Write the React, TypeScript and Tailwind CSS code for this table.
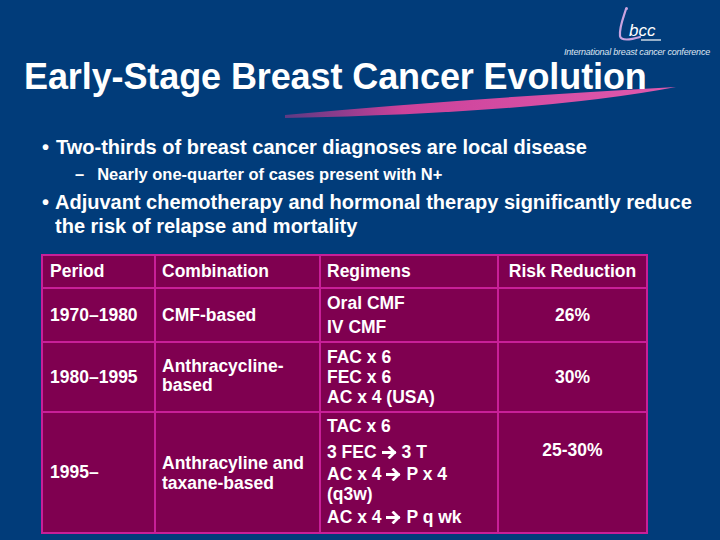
import React from "react";

const Arrow = () => (
  <svg width="15" height="13" viewBox="0 0 15 13" className="inline-block mx-[5px] align-[-1px]">
    <path d="M1 6.5 H12.5 M7.5 1.5 L12.5 6.5 L7.5 11.5" stroke="white" strokeWidth="2.8" fill="none" strokeLinecap="square" />
  </svg>
);

const cell = "bg-[#7f0050] text-white font-bold text-[17.5px] flex";

export default function App() {
  return (
    <div
      className="relative w-[720px] h-[540px] overflow-hidden bg-[#013c7a] flex flex-col"
      style={{ fontFamily: '"Liberation Sans", Arial, sans-serif' }}
    >
      {/* logo */}
      <div className="h-[59px] flex flex-col items-end pr-[10px] pt-[5px]">
        <svg width="52" height="38" viewBox="0 0 52 38" className="mr-[46px]">
          <path d="M14 4 C12 11 7 22 8 31 C9 36 18 35 28 32" stroke="#c9a3e0" strokeWidth="2.2" fill="none" strokeLinecap="round" />
          <circle cx="14.5" cy="3.5" r="1.5" fill="#c9a3e0" />
          <text x="17" y="31" fill="white" fontSize="17" fontStyle="italic" fontFamily="Liberation Sans, Arial, sans-serif">bcc</text>
          <line x1="29" y1="35" x2="49" y2="35" stroke="white" strokeWidth="1.2" />
        </svg>
        <div className="mt-[5px] text-[9px] leading-[9px] italic text-[#dfe6f2] tracking-[-0.2px]">
          International breast cancer conference
        </div>
      </div>

      {/* swoosh */}
      <svg className="absolute left-0 top-0 pointer-events-none" width="720" height="130">
        <defs>
          <linearGradient id="sw" x1="0" x2="1" y1="0" y2="0">
            <stop offset="0" stopColor="#b8388e" stopOpacity="0.5" />
            <stop offset="0.3" stopColor="#cc429a" />
            <stop offset="1" stopColor="#e05aae" />
          </linearGradient>
        </defs>
        <path d="M285 115 Q460 99 676 87 Q540 113 285 118 Z" fill="url(#sw)" />
      </svg>

      {/* title */}
      <h1 className="relative pl-[24px] text-[36px] leading-[36px] font-bold text-white tracking-[-0.1px]">
        Early-Stage Breast Cancer Evolution
      </h1>

      {/* bullets */}
      <div className="mt-[40px] text-white font-bold">
        <div className="flex text-[20px] leading-[24px] pl-[42px]">
          <span className="w-[14px]">•</span>
          <span>Two-thirds of breast cancer diagnoses are local disease</span>
        </div>
        <div className="flex mt-[5px] text-[16.5px] leading-[20px] pl-[75px]">
          <span className="mr-[13px]">–</span>
          <span>Nearly one-quarter of cases present with N+</span>
        </div>
        <div className="flex mt-[6px] text-[20px] leading-[24px] pl-[42px]">
          <span className="w-[13px] shrink-0">•</span>
          <span className="w-[650px]">
            Adjuvant chemotherapy and hormonal therapy significantly reduce the risk of relapse and mortality
          </span>
        </div>
      </div>

      {/* table */}
      <div className="mt-[16px] ml-[41px] w-[607px] bg-[#c81f98] p-[2px] grid grid-cols-[111px_163px_176px_147px] grid-rows-[31px_52px_68px_119px] gap-[2px]">
        <div className={`${cell} items-center pl-[7px]`}>Period</div>
        <div className={`${cell} items-center pl-[6px]`}>Combination</div>
        <div className={`${cell} items-center pl-[6px]`}>Regimens</div>
        <div className={`${cell} items-center justify-center`}>Risk Reduction</div>

        <div className={`${cell} items-center pl-[7px]`}>1970–1980</div>
        <div className={`${cell} items-center pl-[6px]`}>CMF-based</div>
        <div className={`${cell} flex-col justify-center pl-[6px] leading-[24px]`}>
          <span>Oral CMF</span>
          <span>IV CMF</span>
        </div>
        <div className={`${cell} items-center justify-center`}>26%</div>

        <div className={`${cell} items-center pl-[7px]`}>1980–1995</div>
        <div className={`${cell} flex-col justify-center pl-[6px] leading-[19px] pb-[2px]`}>
          <span>Anthracycline-</span>
          <span>based</span>
        </div>
        <div className={`${cell} flex-col justify-center pl-[6px] leading-[20px]`}>
          <span>FAC x 6</span>
          <span>FEC x 6</span>
          <span>AC x 4 (USA)</span>
        </div>
        <div className={`${cell} items-center justify-center`}>30%</div>

        <div className={`${cell} items-center pl-[7px]`}>1995–</div>
        <div className={`${cell} flex-col justify-center pl-[6px] leading-[20px]`}>
          <span>Anthracyline and</span>
          <span>taxane-based</span>
        </div>
        <div className={`${cell} flex-col pl-[6px] pt-[3px] leading-[20px]`}>
          <span>TAC x 6</span>
          <span className="mt-[6px]">3 FEC<Arrow />3 T</span>
          <span className="mt-[2px]">AC x 4<Arrow />P x 4</span>
          <span>(q3w)</span>
          <span className="mt-[3px]">AC x 4<Arrow />P q wk</span>
        </div>
        <div className={`${cell} justify-center pt-[27px]`}>
          <span className="leading-[20px]">25-30%</span>
        </div>
      </div>
    </div>
  );
}
